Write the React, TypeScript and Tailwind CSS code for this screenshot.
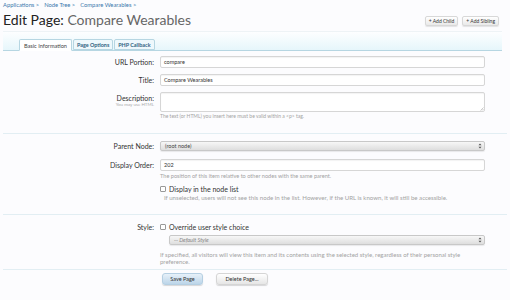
import React from 'react';

const font = { fontFamily: 'Lato, "Open Sans", "DejaVu Sans", sans-serif' };

const Label = ({ children, sub }: { children: React.ReactNode; sub?: string }) => (
  <div className="w-[156px] shrink-0 text-right pr-[2px]">
    <div className="text-[7px] leading-[12px] text-[#333]">{children}</div>
    {sub && <div className="text-[4.5px] leading-[5px] text-[#aaa] -mt-[2px]">{sub}</div>}
  </div>
);

const Hint = ({ children, className = 'text-[5.6px]' }: { children: React.ReactNode; className?: string }) => (
  <p className={`leading-[7px] text-[#a3a3a3] ${className}`}>{children}</p>
);

const SelectBox = ({ value, italic }: { value: string; italic?: boolean }) => (
  <div className="flex-1 h-[10px] flex items-center justify-between rounded-[2px] border border-[#c8c8c8] bg-gradient-to-b from-[#f7f7f7] to-[#dedede] pl-[4px] pr-[2px] shadow-[0_1px_1px_rgba(0,0,0,0.08)]">
    <span className={`text-[5.5px] text-[#444] ${italic ? 'italic text-[#888]' : ''}`}>{value}</span>
    <svg width="4" height="6" viewBox="0 0 4 6">
      <path d="M2 0.5 L3.5 2.3 H0.5 Z M2 5.5 L3.5 3.7 H0.5 Z" fill="#555" />
    </svg>
  </div>
);

const Input = ({ value, className = 'h-[12px]' }: { value?: string; className?: string }) => (
  <div className={`w-[325px] ${className} rounded-[2px] border border-[#d6d6d6] bg-white shadow-[inset_0_1px_1px_rgba(0,0,0,0.05)] px-[3px] flex items-center text-[5.5px] text-[#333]`}>
    {value}
  </div>
);

const Checkbox = () => (
  <span className="inline-block w-[6px] h-[6px] rounded-[1px] border border-[#999] bg-white mr-[3px]" />
);

const Sep = ({ className = '' }: { className?: string }) => (
  <div className={`mx-[3px] h-px bg-[#e2eef3] ${className}`} />
);

export default function App() {
  return (
    <div className="w-[510px] h-[300px] overflow-hidden bg-[#fcfcfe] relative" style={font}>
      <div className="px-[3px] pt-[2px]">
        <div className="text-[5.8px] leading-[6px] text-[#3b78ad] flex gap-[5px]">
          <span>Applications &gt;</span>
          <span>Node Tree &gt;</span>
          <span>Compare Wearables &gt;</span>
        </div>
        <div className="flex items-end justify-between h-[21px]">
          <h1 className="text-[14px] leading-[16px] mb-[1px]">
            <span className="text-[#222]">Edit Page: </span>
            <span className="text-[#666]">Compare Wearables</span>
          </h1>
          <div className="flex gap-[4px] mb-[3px] mr-[8px]">
            <button className="h-[10px] px-[3px] rounded-[2px] border border-[#d8d8d8] bg-gradient-to-b from-white to-[#e9e9e9] text-[5px] leading-[8px] text-[#333] shadow-[0_1px_1px_rgba(0,0,0,0.1)]">+ Add Child</button>
            <button className="h-[10px] px-[3px] rounded-[2px] border border-[#d8d8d8] bg-gradient-to-b from-white to-[#e9e9e9] text-[5px] leading-[8px] text-[#333] shadow-[0_1px_1px_rgba(0,0,0,0.1)]">+ Add Sibling</button>
          </div>
        </div>
      </div>

      <div className="mx-[3px] mt-[2px] w-[499px] h-[20px] border-t border-[#eef3f6] border-b border-b-[#b6d6e2] bg-gradient-to-b from-[#fdfeff] to-[#e6f6fb] flex items-end pl-[16px] gap-[1px]">
        <div className="h-[12px] px-[4px] border border-[#b6d6e2] border-b-white -mb-px bg-white rounded-t-[2px] text-[5.6px] leading-[11px] text-[#444]">Basic Information</div>
        <div className="h-[11px] px-[3px] border border-[#b6d6e2] rounded-t-[2px] bg-[#eef8fc] text-[5.4px] leading-[10px] text-[#2f5f80] font-bold">Page Options</div>
        <div className="h-[11px] px-[3px] border border-[#b6d6e2] rounded-t-[2px] bg-[#eef8fc] text-[5.4px] leading-[10px] text-[#2f5f80] font-bold">PHP Callback</div>
      </div>

      <div className="mt-[5px] flex items-start gap-[4px]">
        <Label>URL Portion:</Label>
        <Input value="compare" />
      </div>
      <div className="mt-[6px] flex items-start gap-[4px]">
        <Label>Title:</Label>
        <Input value="Compare Wearables" />
      </div>
      <div className="mt-[6px] flex items-start gap-[4px]">
        <Label sub="You may use HTML">Description:</Label>
        <div>
          <div className="relative">
            <Input className="h-[20px]" />
            <svg className="absolute right-[1px] bottom-[1px]" width="4" height="4" viewBox="0 0 4 4">
              <path d="M0.5 3.5 L3.5 0.5 M2 3.5 L3.5 2" stroke="#999" strokeWidth="0.5" />
            </svg>
          </div>
          <Hint className="text-[5px] mt-[1px]">The text (or HTML) you insert here must be valid within a &lt;p&gt; tag.</Hint>
        </div>
      </div>

      <Sep className="mt-[13px]" />

      <div className="mt-[6px] flex items-center gap-[4px]">
        <Label>Parent Node:</Label>
        <div className="w-[325px] flex">
          <SelectBox value="(root node)" />
        </div>
      </div>
      <div className="mt-[7px] flex items-start gap-[4px]">
        <Label>Display Order:</Label>
        <div>
          <Input value="202" />
          <Hint className="text-[5.6px] mt-[1px]">The position of this item relative to other nodes with the same parent.</Hint>
          <div className="mt-[6px] flex items-center text-[7px] leading-[8px] text-[#333]">
            <Checkbox />Display in the node list
          </div>
          <Hint className="text-[6.1px] mt-[1px] pl-[4px]">If unselected, users will not see this node in the list. However, if the URL is known, it will still be accessible.</Hint>
        </div>
      </div>

      <Sep className="mt-[13px]" />

      <div className="mt-[8px] flex items-start gap-[4px]">
        <div className="w-[156px] shrink-0 text-right pr-[2px] text-[7px] leading-[8px] text-[#333]">Style:</div>
        <div className="w-[325px]">
          <div className="flex items-center text-[7px] leading-[8px] text-[#333]">
            <Checkbox />Override user style choice
          </div>
          <div className="mt-[4px] ml-[9px] flex">
            <SelectBox value="-- Default Style" italic />
          </div>
          <Hint className="text-[6px] mt-[6px]">If specified, all visitors will view this item and its contents using the selected style, regardless of their personal style preference.</Hint>
        </div>
      </div>

      <Sep className="mt-[4px]" />

      <div className="mt-[3px] pl-[162px] flex gap-[13px]">
        <button className="h-[12px] w-[41px] rounded-[3px] border border-[#b5cfe2] bg-gradient-to-b from-[#e7f1f9] to-[#bcd5e9] text-[5.5px] text-[#333] shadow-[0_1px_1px_rgba(0,0,0,0.15)]">Save Page</button>
        <button className="h-[12px] w-[52px] rounded-[3px] border border-[#d5d5d5] bg-gradient-to-b from-white to-[#e6e6e6] text-[5.5px] text-[#333] shadow-[0_1px_1px_rgba(0,0,0,0.15)]">Delete Page...</button>
      </div>
    </div>
  );
}
